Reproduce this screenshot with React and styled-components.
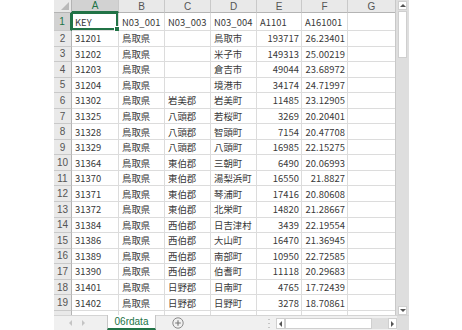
import React from "react";
import styled, { createGlobalStyle } from "styled-components";

const GlobalStyle = createGlobalStyle`
  html, body {
    margin: 0;
    padding: 0;
    background: #ffffff;
  }
  body {
    font-family: "Noto Sans CJK JP", "Liberation Sans", sans-serif;
  }
`;

const Window = styled.div`
  margin-left: 54px;
  width: 355px;
  height: 330px;
  display: flex;
  flex-direction: column;
  overflow: hidden;
  background: #ffffff;
`;

const Main = styled.div`
  display: flex;
  height: 315px;
`;

const Sheet = styled.div`
  display: grid;
  grid-template-columns: 18px 47px 46px 46px 46px 45px 46px 48px;
  grid-template-rows: 13px 18px repeat(19, 15.55px);
  width: 342px;
  height: 315px;
  overflow: hidden;
  border-right: 1px solid #c8c8c8;
  box-sizing: border-box;
`;

const Cell = styled.div`
  position: relative;
  box-sizing: border-box;
  display: flex;
  align-items: center;
  justify-content: ${(p) => (p.$num ? "flex-end" : "flex-start")};
  padding: 0 2px 0 3px;
  border-right: 1px solid #dcdcdc;
  border-bottom: 1px solid #dcdcdc;
  font-size: 9.4px;
  color: #383838;
  white-space: nowrap;
  overflow: visible;
  letter-spacing: 0.05px;
`;

const ColHead = styled.div`
  box-sizing: border-box;
  display: flex;
  align-items: center;
  justify-content: center;
  background: ${(p) => (p.$active ? "#d2d2d2" : "#e9e9e9")};
  color: ${(p) => (p.$active ? "#217346" : "#555555")};
  border-right: 1px solid #c9c9c9;
  border-bottom: ${(p) => (p.$active ? "2px solid #217346" : "1px solid #b4b4b4")};
  font-family: "Liberation Sans", sans-serif;
  font-size: 10px;
`;

const RowHead = styled.div`
  box-sizing: border-box;
  display: flex;
  align-items: center;
  justify-content: center;
  background: ${(p) => (p.$active ? "#d2d2d2" : "#e9e9e9")};
  color: ${(p) => (p.$active ? "#217346" : "#555555")};
  border-right: ${(p) => (p.$active ? "2px solid #217346" : "1px solid #b4b4b4")};
  border-bottom: 1px solid #c9c9c9;
  font-family: "Liberation Sans", sans-serif;
  font-size: 10px;
`;

const Corner = styled.div`
  box-sizing: border-box;
  display: flex;
  align-items: flex-end;
  justify-content: flex-end;
  padding: 0 2px 2px 0;
  background: #e9e9e9;
  border-right: 1px solid #b4b4b4;
  border-bottom: 1px solid #b4b4b4;
`;

const Selection = styled.div`
  position: absolute;
  left: -1px;
  top: -1px;
  right: 0;
  bottom: 0;
  border: 2px solid #217346;
  pointer-events: none;
  &::after {
    content: "";
    position: absolute;
    right: -4px;
    bottom: -4px;
    width: 4px;
    height: 4px;
    background: #217346;
    border: 1px solid #ffffff;
  }
`;

const VScroll = styled.div`
  width: 13px;
  background: #dedede;
  display: flex;
  flex-direction: column;
  align-items: center;
  padding: 1px 0 0;
  box-sizing: border-box;
  gap: 1px;
`;

const ArrowBox = styled.div`
  width: ${(p) => p.$w || 9}px;
  height: ${(p) => p.$h || 9}px;
  background: #ffffff;
  border: 1px solid #cfcfcf;
  box-sizing: border-box;
  display: flex;
  align-items: center;
  justify-content: center;
  flex-shrink: 0;
`;

const Thumb = styled.div`
  width: 9px;
  height: 47px;
  background: #ffffff;
  border: 1px solid #cfcfcf;
  box-sizing: border-box;
`;

const Track = styled.div`
  flex: 1;
`;

const TabBar = styled.div`
  display: flex;
  align-items: stretch;
  height: 15px;
  background: #f0f0f0;
  border-top: 1px solid #d4d4d4;
  box-sizing: border-box;
`;

const Nav = styled.div`
  width: 53px;
  display: flex;
  align-items: center;
  justify-content: flex-start;
  gap: 8px;
  padding-left: 14px;
  box-sizing: border-box;
`;

const Tab = styled.div`
  width: 49px;
  background: #ffffff;
  color: #217346;
  font-family: "Liberation Sans", sans-serif;
  font-size: 10px;
  display: flex;
  align-items: center;
  justify-content: center;
  border-left: 1px solid #c6c6c6;
  border-right: 1px solid #c6c6c6;
  border-bottom: 2px solid #217346;
  box-sizing: border-box;
  margin-top: -1px;
`;

const AddArea = styled.div`
  width: 106px;
  display: flex;
  align-items: center;
  padding-left: 16px;
  box-sizing: border-box;
`;

const Dots = styled.div`
  width: 14px;
  display: flex;
  align-items: center;
  justify-content: center;
`;

const HScroll = styled.div`
  width: 121px;
  display: flex;
  align-items: flex-start;
  padding-top: 2px;
  box-sizing: border-box;
  background: #f0f0f0;
`;

const HTrack = styled.div`
  display: flex;
  flex: 1;
  height: 11px;
  background: #dedede;
`;

const HThumb = styled.div`
  width: 87px;
  height: 11px;
  background: #ffffff;
  border: 1px solid #cfcfcf;
  box-sizing: border-box;
`;

const BottomCorner = styled.div`
  flex: 1;
  background: #dedede;
`;

const Tri = ({ dir, color = "#555" }) => {
  const pts = {
    up: "0,4 3,1 6,4",
    down: "0,1 3,4 6,1",
    left: "4,0 1,3 4,6",
    right: "1,0 4,3 1,6",
  }[dir];
  const w = dir === "up" || dir === "down" ? 6 : 5;
  const h = dir === "up" || dir === "down" ? 5 : 6;
  return (
    <svg width={w} height={h} viewBox={`0 0 ${w} ${h}`}>
      <polygon points={pts} fill={color} />
    </svg>
  );
};

const cols = ["A", "B", "C", "D", "E", "F", "G"];

const rows = [
  ["KEY", "N03_001", "N03_003", "N03_004", "A1101", "A161001"],
  ["31201", "鳥取県", "", "鳥取市", "193717", "26.23401"],
  ["31202", "鳥取県", "", "米子市", "149313", "25.00219"],
  ["31203", "鳥取県", "", "倉吉市", "49044", "23.68972"],
  ["31204", "鳥取県", "", "境港市", "34174", "24.71997"],
  ["31302", "鳥取県", "岩美郡", "岩美町", "11485", "23.12905"],
  ["31325", "鳥取県", "八頭郡", "若桜町", "3269", "20.20401"],
  ["31328", "鳥取県", "八頭郡", "智頭町", "7154", "20.47708"],
  ["31329", "鳥取県", "八頭郡", "八頭町", "16985", "22.15275"],
  ["31364", "鳥取県", "東伯郡", "三朝町", "6490", "20.06993"],
  ["31370", "鳥取県", "東伯郡", "湯梨浜町", "16550", "21.8827"],
  ["31371", "鳥取県", "東伯郡", "琴浦町", "17416", "20.80608"],
  ["31372", "鳥取県", "東伯郡", "北栄町", "14820", "21.28667"],
  ["31384", "鳥取県", "西伯郡", "日吉津村", "3439", "22.19554"],
  ["31386", "鳥取県", "西伯郡", "大山町", "16470", "21.36945"],
  ["31389", "鳥取県", "西伯郡", "南部町", "10950", "22.72585"],
  ["31390", "鳥取県", "西伯郡", "伯耆町", "11118", "20.29683"],
  ["31401", "鳥取県", "日野郡", "日南町", "4765", "17.72439"],
  ["31402", "鳥取県", "日野郡", "日野町", "3278", "18.70861"],
];

// the sliver of row 20 that peeks out above the sheet tabs
const BLANK = ["", "", "", "", "", "", ""];

const App = () => {
  return (
    <>
      <GlobalStyle />
      <Window>
        <Main>
          <Sheet>
            <Corner>
              <svg width="8" height="8" viewBox="0 0 8 8">
                <polygon points="8,0 8,8 0,8" fill="#b9b9b9" />
              </svg>
            </Corner>
            {cols.map((c) => (
              <ColHead key={c} $active={c === "A"}>
                {c}
              </ColHead>
            ))}
            {rows.map((r, i) => (
              <React.Fragment key={i}>
                <RowHead $active={i === 0}>{i + 1}</RowHead>
                {r.map((v, j) => {
                  const num = i > 0 && j >= 4;
                  return (
                    <Cell key={j} $num={num}>
                      {v}
                      {i === 0 && j === 0 && <Selection />}
                    </Cell>
                  );
                })}
                <Cell />
              </React.Fragment>
            ))}
            <RowHead />
            {BLANK.map((_, j) => (
              <Cell key={"b" + j} />
            ))}
          </Sheet>
          <VScroll>
            <ArrowBox>
              <Tri dir="up" />
            </ArrowBox>
            <Thumb />
            <Track />
            <ArrowBox>
              <Tri dir="down" />
            </ArrowBox>
          </VScroll>
        </Main>
        <TabBar>
          <Nav>
            <Tri dir="left" color="#c4c4c4" />
            <Tri dir="right" color="#c4c4c4" />
          </Nav>
          <Tab>06rdata</Tab>
          <AddArea>
            <svg width="12" height="12" viewBox="0 0 12 12">
              <circle cx="6" cy="6" r="5.2" fill="none" stroke="#8a8a8a" strokeWidth="1" />
              <path d="M6 3.2v5.6M3.2 6h5.6" stroke="#777" strokeWidth="1.1" />
            </svg>
          </AddArea>
          <Dots>
            <svg width="2" height="9" viewBox="0 0 2 9">
              <rect x="0.5" y="0" width="1" height="1" fill="#9a9a9a" />
              <rect x="0.5" y="4" width="1" height="1" fill="#9a9a9a" />
              <rect x="0.5" y="8" width="1" height="1" fill="#9a9a9a" />
            </svg>
          </Dots>
          <HScroll>
            <ArrowBox $h={11}>
              <Tri dir="left" />
            </ArrowBox>
            <HTrack>
              <HThumb />
            </HTrack>
            <ArrowBox $h={11}>
              <Tri dir="right" />
            </ArrowBox>
          </HScroll>
          <BottomCorner />
        </TabBar>
      </Window>
    </>
  );
};

export default App;
